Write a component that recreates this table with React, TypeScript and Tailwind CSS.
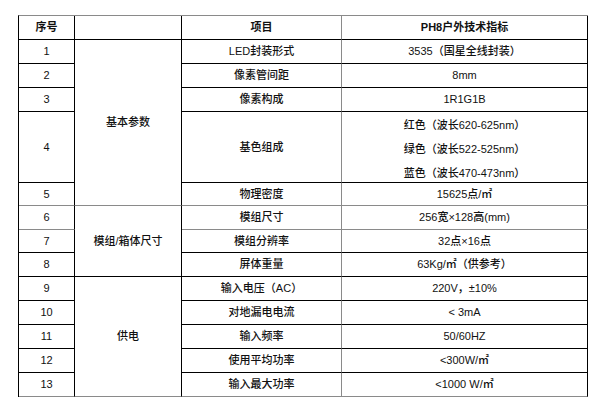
import React from 'react';

const K = 'border-black';
const G = 'border-[#8a8a8a]';

type Cell = { text: React.ReactNode; span?: string; r?: string; b?: string; bold?: boolean };

const cells: Cell[] = [
  // header
  { text: '序号', bold: true },
  { text: '' },
  { text: '项目', bold: true, r: G },
  { text: 'PH8户外技术指标', bold: true },
  // 1
  { text: '1' },
  { text: '基本参数', span: 'row-span-5', b: G },
  { text: 'LED封装形式', r: G },
  { text: '3535（国星全线封装）' },
  { text: '2' },
  { text: '像素管间距', r: G },
  { text: '8mm' },
  { text: '3' },
  { text: '像素构成', r: G },
  { text: '1R1G1B' },
  { text: '4' },
  { text: '基色组成', r: G },
  {
    text: (
      <div className="flex flex-col gap-[13px] pt-[4px]">
        <span>红色（波长620-625nm）</span>
        <span>绿色（波长522-525nm）</span>
        <span>蓝色（波长470-473nm）</span>
      </div>
    ),
  },
  { text: '5', b: G },
  { text: '物理密度', r: G, b: G },
  { text: '15625点/㎡', b: G },
  // 6
  { text: '6', b: G },
  { text: '模组/箱体尺寸', span: 'row-span-3' },
  { text: '模组尺寸', r: G, b: G },
  { text: '256宽×128高(mm)', b: G },
  { text: '7' },
  { text: '模组分辨率', r: G },
  { text: '32点×16点' },
  { text: '8' },
  { text: '屏体重量', r: G },
  { text: '63Kg/㎡（供参考）' },
  // 9
  { text: '9' },
  { text: '供电', span: 'row-span-5', b: G },
  { text: '输入电压（AC）', r: G },
  { text: '220V，±10%' },
  { text: '10' },
  { text: '对地漏电电流', r: G },
  { text: '< 3mA' },
  { text: '11' },
  { text: '输入频率', r: G },
  { text: '50/60HZ' },
  { text: '12' },
  { text: '使用平均功率', r: G },
  { text: '<300W/㎡' },
  { text: '13', b: G },
  { text: '输入最大功率', r: G, b: G },
  { text: '<1000 W/㎡', b: G },
];

export default function App() {
  return (
    <div
      className="w-[600px] h-[411px] bg-white pt-[15px] pl-[18px] text-[11px] text-[#111]"
      style={{ fontFamily: '"Liberation Sans", "Noto Sans CJK SC", sans-serif' }}
    >
      <div className="grid w-[570px] grid-cols-[56px_107px_160px_246px] grid-rows-[24px_24px_24px_24px_71px_23px_24px_23px_24px_24px_24px_24px_24px_24px] border-t border-l border-t-[#8a8a8a] border-l-black">
        {cells.map((c, i) => (
          <div
            key={i}
            className={`flex items-center justify-center border-r border-b text-center leading-none ${c.span ?? ''} ${c.r ?? K} ${c.b ?? K} ${c.bold ? 'font-bold' : 'font-medium'}`}
            style={{
              borderRightColor: c.r === G ? '#8a8a8a' : undefined,
              borderBottomColor: c.b === G ? '#8a8a8a' : undefined,
            }}
          >
            {c.text}
          </div>
        ))}
      </div>
    </div>
  );
}
